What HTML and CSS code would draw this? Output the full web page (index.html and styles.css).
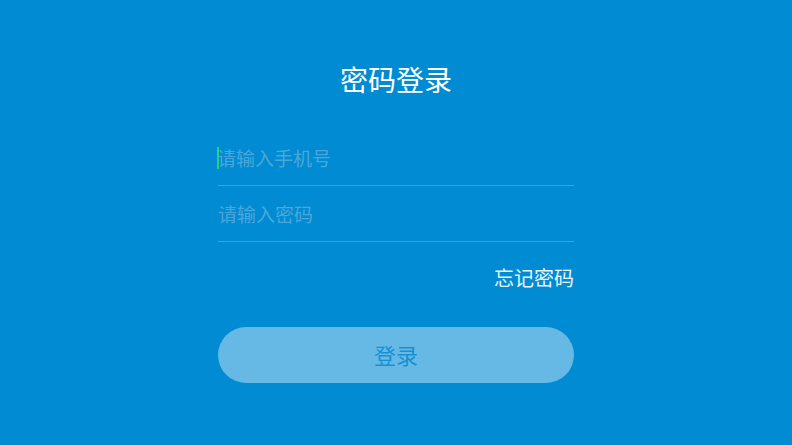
FILE: index.html
```
<!DOCTYPE html>
<html lang="zh-CN">
<head>
<meta charset="utf-8">
<title>密码登录</title>
<link rel="stylesheet" href="styles.css">
</head>
<body>
<main class="page">
  <h1 class="title">密码登录</h1>
  <div class="field"><span class="caret"></span><span class="placeholder">请输入手机号</span></div>
  <div class="field"><span class="placeholder">请输入密码</span></div>
  <div class="forgot-row"><a class="forgot">忘记密码</a></div>
  <button class="login-btn" type="button">登录</button>
</main>
</body>
</html>
```
FILE: styles.css
```
html, body {
  margin: 0;
  padding: 0;
  height: 100%;
}
body {
  background: #018bd2;
  font-family: "Noto Sans CJK SC", "Noto Sans", sans-serif;
}
.page {
  width: 356px;
  margin: 0 auto;
  padding-top: 59px;
  display: flex;
  flex-direction: column;
}
.title {
  margin: 0 0 31px;
  font-size: 28px;
  line-height: 40px;
  font-weight: 400;
  color: #ffffff;
  text-align: center;
}
.field {
  height: 55px;
  border-bottom: 1px solid #3aa2da;
  display: flex;
  align-items: center;
}
.caret {
  width: 2px;
  height: 22px;
  background: #22d47c;
  margin-right: -2px;
  margin-left: -1px;
}
.placeholder {
  font-size: 19px;
  line-height: 24px;
  color: #4ba7da;
}
.forgot-row {
  margin-top: 22px;
  display: flex;
  justify-content: flex-end;
}
.forgot {
  font-size: 20px;
  line-height: 28px;
  color: #e8f3fa;
}
.login-btn {
  margin-top: 35px;
  height: 56px;
  border: none;
  border-radius: 28px;
  background: #66b9e4;
  color: #1791d2;
  font-family: inherit;
  font-size: 22px;
  padding: 0 0 3px;
}
```
